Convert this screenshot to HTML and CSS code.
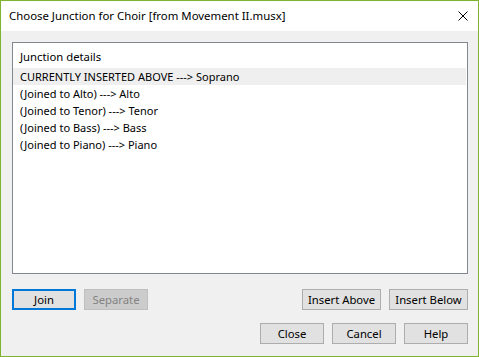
FILE: index.html
```html
<!DOCTYPE html>
<html>
<head>
<meta charset="utf-8">
<link rel="stylesheet" href="styles.css">
</head>
<body>
<div class="window">
  <div class="titlebar">
    <span class="title">Choose Junction for Choir [from Movement II.musx]</span>
    <svg class="close-x" width="10" height="10" viewBox="0 0 10 10"><path d="M0.5 0.5 L9.5 9.5 M9.5 0.5 L0.5 9.5" stroke="#000" stroke-width="1" fill="none"/></svg>
  </div>
  <div class="client">
    <div class="listbox">
      <div class="list-header">Junction details</div>
      <div class="row selected">CURRENTLY INSERTED ABOVE ---&gt; Soprano</div>
      <div class="row">(Joined to Alto) ---&gt; Alto</div>
      <div class="row">(Joined to Tenor) ---&gt; Tenor</div>
      <div class="row">(Joined to Bass) ---&gt; Bass</div>
      <div class="row">(Joined to Piano) ---&gt; Piano</div>
    </div>
    <div class="btn-row first">
      <div class="group">
        <button class="btn default">Join</button>
        <button class="btn disabled">Separate</button>
      </div>
      <div class="group">
        <button class="btn wide">Insert Above</button>
        <button class="btn wide">Insert Below</button>
      </div>
    </div>
    <div class="btn-row second">
      <div class="group">
        <button class="btn">Close</button>
        <button class="btn">Cancel</button>
        <button class="btn">Help</button>
      </div>
    </div>
  </div>
</div>
</body>
</html>
```
FILE: styles.css
```css
* { box-sizing: border-box; }
html, body { margin: 0; padding: 0; }
body {
  width: 479px;
  height: 357px;
  font-family: "Noto Sans", "Segoe UI", sans-serif;
  font-size: 11.3px;
  color: #000;
}
.window {
  width: 479px;
  height: 357px;
  border: 1px solid #7fb430;
  display: flex;
  flex-direction: column;
  background: #f0f0f0;
}
.titlebar {
  height: 30px;
  background: #fff;
  display: flex;
  align-items: center;
  justify-content: space-between;
  padding-left: 8px;
  padding-right: 10px;
}
.title {
  font-size: 11.4px;
  line-height: 16px;
  color: #000;
}
.close-x { display: block; margin-top: -1px; }
.client {
  flex: 1;
  padding: 11px 10px 0 11px;
  display: flex;
  flex-direction: column;
}
.listbox {
  height: 232px;
  background: #fff;
  border: 1px solid #828790;
  padding-right: 1px;
}
.list-header {
  height: 25px;
  line-height: 25px;
  padding-left: 7px;
  padding-top: 1px;
}
.row {
  height: 17px;
  line-height: 17px;
  padding-left: 7px;
  font-size: 11px;
}
.row.selected { background: #efefef; }
.btn-row {
  display: flex;
  justify-content: space-between;
}
.btn-row.first { margin-top: 15px; }
.btn-row.second { margin-top: 13px; justify-content: flex-end; }
.group { display: flex; gap: 8px; }
.btn {
  width: 64px;
  height: 21px;
  padding: 0;
  margin: 0;
  background: #e1e1e1;
  border: 1px solid #adadad;
  font-family: inherit;
  font-size: 11.3px;
  color: #000;
  line-height: 18px;
}
.btn.wide { width: 79px; }
.btn.default { border: 2px solid #0078d7; }
.btn.disabled {
  background: #cccccc;
  border-color: #bfbfbf;
  color: #838383;
}
```
